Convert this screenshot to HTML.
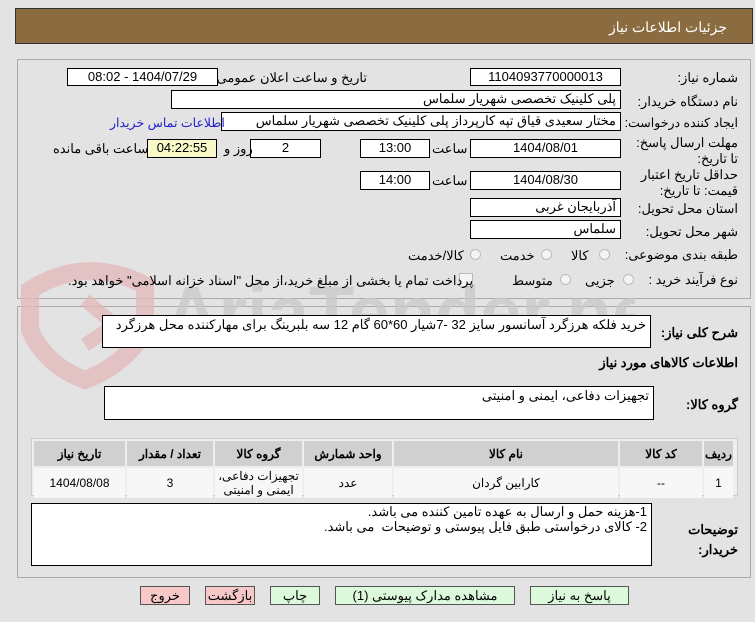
<!DOCTYPE html>
<html><head><meta charset="utf-8"><style>
body{margin:0;width:755px;height:622px;background:#e3e3e3;font-family:"Liberation Sans","Noto Sans CJK SC",sans-serif;font-size:13px;color:#000;position:relative;overflow:hidden}
.a{position:absolute}
.b{position:absolute;background:#fff;border:1px solid #000;box-sizing:border-box;direction:rtl;padding:0 4px;line-height:16px;white-space:nowrap}
.c{text-align:center}
.l{position:absolute;direction:rtl;white-space:nowrap}
.rad{position:absolute;width:11px;height:11px;border-radius:50%;border:1px solid #bbb;background:#f4f4f4;box-sizing:border-box}
table{border-collapse:separate;border-spacing:2px}
th{background:#d0d0d0;height:23px;font-weight:bold;font-size:12px}
td{background:#f7f7f7;height:27px;text-align:center;font-size:12px;line-height:14px}
.btn{position:absolute;top:586px;height:19px;border:1px solid #555;box-sizing:border-box;text-align:center;line-height:17px;background:#dcf9dc}
.pk{background:#f7c8c8}
</style></head><body>
<div class="a" style="left:15px;top:8px;width:738px;height:36px;background:#8b6b40;border:1px solid #333;box-sizing:border-box"></div>
<div class="l" style="right:28px;top:19px;color:#fff;font-size:14px">جزئیات اطلاعات نیاز</div>
<div class="a" style="left:17px;top:59px;width:734px;height:240px;border:1px solid #aaa;box-sizing:border-box"></div>
<div class="a" style="left:17px;top:306px;width:734px;height:272px;border:1px solid #aaa;box-sizing:border-box"></div>
<svg class="a" style="left:15px;top:250px" width="620" height="140" opacity=".75"><path d="M15 40 Q70 5 130 35 L130 80 Q110 115 70 130 Q30 115 15 80Z" fill="none" stroke="#e2b8b8" stroke-width="18"/><path d="M70 50 L100 75 L70 95" fill="none" stroke="#e2b8b8" stroke-width="14"/><text x="150" y="88" font-family="Liberation Sans" font-weight="bold" font-size="74" fill="#c9c9c9">AriaTender.net</text></svg>

<div class="l" style="right:17px;top:70px">شماره نیاز:</div>
<div class="b c" style="left:470px;top:68px;width:151px;height:18px">1104093770000013</div>
<div class="l" style="right:388px;top:70px">تاریخ و ساعت اعلان عمومی:</div>
<div class="b c" style="left:67px;top:68px;width:151px;height:18px">1404/07/29 - 08:02</div>

<div class="l" style="right:17px;top:94px">نام دستگاه خریدار:</div>
<div class="b" style="left:171px;top:90px;width:450px;height:19px">پلی کلینیک تخصصی شهریار سلماس</div>

<div class="l" style="right:17px;top:115px;font-size:12.5px">ایجاد کننده درخواست:</div>
<div class="b" style="left:221px;top:112px;width:400px;height:19px">مختار سعیدی قیاق تپه کارپرداز پلی کلینیک تخصصی شهریار سلماس</div>
<div class="l" style="left:110px;top:115px;color:#2222cc;font-size:12.5px">اطلاعات تماس خریدار</div>

<div class="l" style="right:17px;top:135px;width:112px;line-height:16px;white-space:normal">مهلت ارسال پاسخ: تا تاریخ:</div>
<div class="b c" style="left:470px;top:139px;width:151px;height:19px">1404/08/01</div>
<div class="l" style="left:432px;top:141px">ساعت</div>
<div class="b c" style="left:360px;top:139px;width:70px;height:19px">13:00</div>
<div class="b c" style="left:250px;top:139px;width:71px;height:19px">2</div>
<div class="l" style="left:224px;top:141px">روز و</div>
<div class="b c" style="left:147px;top:139px;width:70px;height:19px;background:#f8f8c8">04:22:55</div>
<div class="l" style="left:53px;top:141px">ساعت باقی مانده</div>

<div class="l" style="right:17px;top:167px;width:112px;line-height:16px;white-space:normal">حداقل تاریخ اعتبار قیمت: تا تاریخ:</div>
<div class="b c" style="left:470px;top:171px;width:151px;height:19px">1404/08/30</div>
<div class="l" style="left:432px;top:173px">ساعت</div>
<div class="b c" style="left:360px;top:171px;width:70px;height:19px">14:00</div>

<div class="l" style="right:17px;top:201px">استان محل تحویل:</div>
<div class="b" style="left:470px;top:198px;width:151px;height:19px">آذربایجان غربی</div>
<div class="l" style="right:17px;top:224px">شهر محل تحویل:</div>
<div class="b" style="left:470px;top:220px;width:151px;height:19px">سلماس</div>

<div class="l" style="right:17px;top:247px">طبقه بندی موضوعی:</div>
<div class="rad" style="left:599px;top:249px"></div><div class="l" style="left:571px;top:248px">کالا</div>
<div class="rad" style="left:541px;top:249px"></div><div class="l" style="left:500px;top:248px">خدمت</div>
<div class="rad" style="left:470px;top:249px"></div><div class="l" style="left:408px;top:248px">کالا/خدمت</div>

<div class="l" style="right:17px;top:272px">نوع فرآیند خرید :</div>
<div class="rad" style="left:623px;top:274px"></div><div class="l" style="left:585px;top:273px">جزیی</div>
<div class="rad" style="left:560px;top:274px"></div><div class="l" style="left:512px;top:273px">متوسط</div>
<div class="a" style="left:459px;top:273px;width:12px;height:12px;border:1px solid #bbb;background:#f4f4f4"></div>
<div class="l" style="left:68px;top:273px">پرداخت تمام یا بخشی از مبلغ خرید،از محل "اسناد خزانه اسلامی" خواهد بود.</div>

<div class="l" style="right:17px;top:325px;font-weight:bold">شرح کلی نیاز:</div>
<div class="b" style="left:102px;top:315px;width:549px;height:33px;line-height:18px">خرید فلکه هرزگرد آسانسور سایز 32 -7شیار 60*60 گام 12 سه بلبرینگ برای مهارکننده محل هرزگرد</div>
<div class="l" style="right:17px;top:355px;font-weight:bold">اطلاعات کالاهای مورد نیاز</div>
<div class="l" style="right:17px;top:397px;font-weight:bold">گروه کالا:</div>
<div class="b" style="left:104px;top:386px;width:550px;height:34px;line-height:18px">تجهیزات دفاعی، ایمنی و امنیتی</div>

<div class="a" style="left:31px;top:438px;width:707px;height:58px;border:1px solid #ccc;box-sizing:border-box;background:#eee">
<table dir="rtl" style="width:703px;margin:0">
<tr><th style="width:27px">ردیف</th><th style="width:80px">کد کالا</th><th>نام کالا</th><th style="width:86px">واحد شمارش</th><th style="width:85px">گروه کالا</th><th style="width:84px">تعداد / مقدار</th><th style="width:89px">تاریخ نیاز</th></tr>
<tr><td>1</td><td>--</td><td>کارابین گردان</td><td>عدد</td><td>تجهیزات دفاعی، ایمنی و امنیتی</td><td>3</td><td>1404/08/08</td></tr>
</table></div>

<div class="l" style="right:17px;top:520px;font-weight:bold;width:70px;white-space:normal;line-height:20px">توضیحات خریدار:</div>
<div class="b" style="left:31px;top:503px;width:621px;height:63px;line-height:15px;white-space:pre">1-هزینه حمل و ارسال به عهده تامین کننده می باشد.
2- کالای درخواستی طبق فایل پیوستی و توضیحات  می باشد.</div>

<div class="btn pk" style="left:140px;width:50px">خروج</div>
<div class="btn pk" style="left:205px;width:50px">بازگشت</div>
<div class="btn" style="left:270px;width:50px">چاپ</div>
<div class="btn" style="left:335px;width:180px">مشاهده مدارک پیوستی (1)</div>
<div class="btn" style="left:530px;width:99px">پاسخ به نیاز</div>
</body></html>
